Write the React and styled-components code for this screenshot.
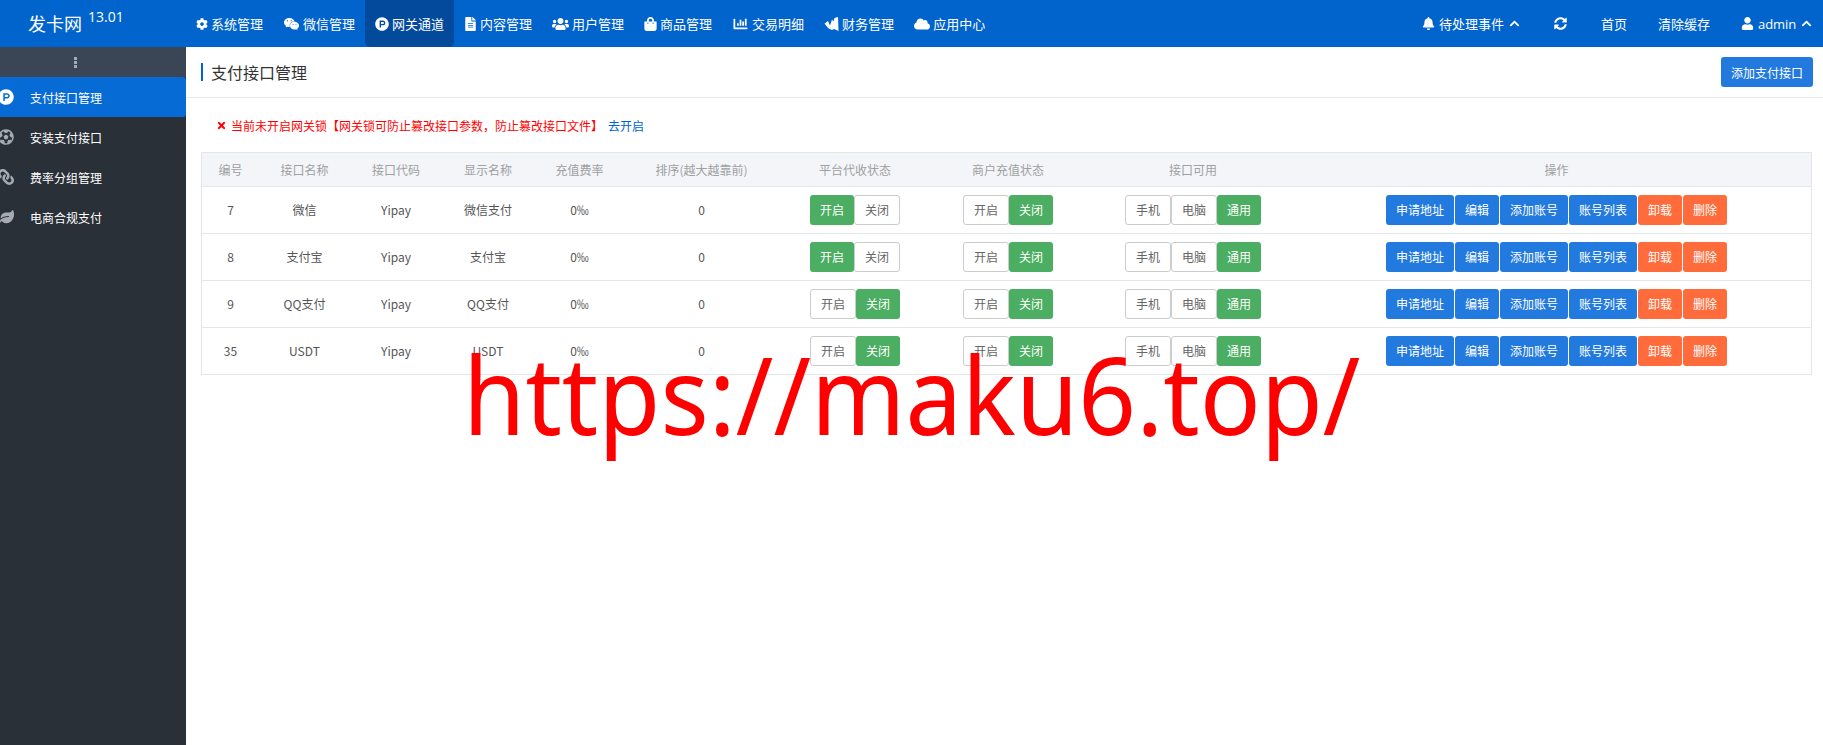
import React from "react";
import styled, { createGlobalStyle } from "styled-components";
import {
  FaCog, FaWeixin, FaProductHunt, FaFileAlt, FaUsers, FaShoppingBag, FaChartBar,
  FaCloud, FaBell, FaSyncAlt, FaUser, FaChevronUp, FaTimes, FaFutbol,
  FaLink, FaLeaf,
} from "react-icons/fa";

const GlobalStyle = createGlobalStyle`
  html, body { margin: 0; padding: 0; background: #fff; }
  body { font-family: "Noto Sans CJK SC", "Liberation Sans", sans-serif; font-size: 12px; color: #555; }
  * { box-sizing: border-box; }
`;

const Page = styled.div`
  position: relative;
  width: 1823px;
  height: 745px;
  overflow: hidden;
  display: flex;
  flex-direction: column;
`;

const TopBar = styled.header`
  height: 47px;
  flex: none;
  background: #0064cc;
  color: #fff;
  display: flex;
  align-items: stretch;
`;

const Logo = styled.div`
  width: 186px;
  flex: none;
  padding: 13px 0 0 28px;
  font-size: 18px;
  line-height: 20px;
  display: flex;
  align-items: flex-start;
  sup {
    font-family: "Open Sans", sans-serif;
    font-size: 14px;
    line-height: 14px;
    margin: -3px 0 0 6px;
    vertical-align: baseline;
  }
`;

const MainNav = styled.nav`
  display: flex;
  align-items: stretch;
  flex: 1;
`;

const NavItem = styled.div`
  display: flex;
  align-items: center;
  gap: 3px;
  padding: 0 10px;
  font-size: 13px;
  white-space: nowrap;
  border-radius: 0 0 5px 5px;
  background: ${(p) => (p.$active ? "#044a9c" : "transparent")};
  svg { flex: none; width: ${(p) => p.$icon || 14}px; height: 14px; }
`;

const RightNav = styled.div`
  display: flex;
  align-items: center;
  padding-right: 11px;
  font-size: 13px;
`;

const RightItem = styled.div`
  display: flex;
  align-items: center;
  gap: 4px;
  margin-left: ${(p) => p.$left || 0}px;
  white-space: nowrap;
  svg { width: 13px; height: 13px; }
  svg.caret { width: 11px; height: 11px; margin-left: 1px; }
`;

const AdminName = styled.span`
  font-family: "Open Sans", sans-serif;
  letter-spacing: -0.1px;
`;

const Body = styled.div`
  flex: 1;
  display: flex;
  min-height: 0;
`;

const Sidebar = styled.aside`
  width: 186px;
  flex: none;
  background: #2a3038;
  overflow: hidden;
`;

const SideToggle = styled.div`
  height: 30px;
  padding-right: 36px;
  background: #3a4556;
  display: flex;
  flex-direction: column;
  align-items: center;
  justify-content: center;
  gap: 1px;
  i {
    width: 3px;
    height: 3px;
    background: #a4abb5;
  }
`;

const SideItem = styled.div`
  height: 40px;
  display: flex;
  align-items: center;
  gap: 16px;
  font-size: 12px;
  color: #fff;
  border-radius: 0 3px 3px 0;
  background: ${(p) => (p.$active ? "#076bd6" : "transparent")};
  svg {
    flex: none;
    width: 16px;
    height: 16px;
    margin-left: -2px;
    color: ${(p) => (p.$active ? "#fff" : "#a5abb3")};
    transform: ${(p) => (p.$flip ? "scaleX(-1)" : "none")};
  }
`;

const Main = styled.main`
  flex: 1;
  min-width: 0;
`;

const TitleBar = styled.div`
  height: 51px;
  border-bottom: 1px solid #e8e8e8;
  display: flex;
  align-items: center;
  justify-content: space-between;
  padding: 0 10px 0 15px;
`;

const Title = styled.h1`
  margin: 0;
  font-size: 16px;
  font-weight: 400;
  line-height: 18px;
  color: #333;
  border-left: 2px solid #0064cc;
  padding-left: 8px;
`;

const Button = styled.button`
  height: 30px;
  border: 0;
  padding: 0 10px;
  border-radius: 3px;
  font: inherit;
  font-size: 12px;
  color: #fff;
  white-space: nowrap;
  background: ${(p) => ({ blue: "#227ade", orange: "#ff6b3b", green: "#4cae62" })[p.$tone] || "#fff"};
  ${(p) => !p.$tone && "color: #666; border: 1px solid #ccc; padding: 0 10px;"}
`;

const Notice = styled.div`
  display: flex;
  align-items: center;
  height: 28px;
  margin: 13px 0 13px 30px;
  color: #f00;
  font-size: 12px;
  svg { width: 11px; height: 11px; margin-right: 4px; }
  a { color: #0064cc; margin-left: 5px; text-decoration: none; }
`;

const TableWrap = styled.div`
  margin: 0 11px 0 15px;
  border: 1px solid #e3e7ec;
  border-bottom: 0;
`;

const Table = styled.table`
  width: 100%;
  table-layout: fixed;
  border-collapse: collapse;
  text-align: center;
`;

const Th = styled.th`
  height: 33px;
  width: ${(p) => p.$w}px;
  padding: 0;
  font-weight: 400;
  font-size: 12px;
  color: #a0a0a0;
  background: #f3f5f9;
  border-bottom: 1px solid #e3e7ec;
`;

const Td = styled.td`
  height: 47px;
  padding: 0;
  color: #555;
  font-size: 12px;
  border-bottom: 1px solid #e3e7ec;
`;

const Group = styled.div`
  display: inline-flex;
  vertical-align: middle;
  gap: ${(p) => p.$gap || 0}px;
`;

const Watermark = styled.div`
  position: absolute;
  left: 463px;
  top: 320px;
  font-family: "Noto Sans", sans-serif;
  font-size: 108px;
  line-height: 147px;
  color: #f00;
  white-space: nowrap;
  transform: scaleX(0.935);
  transform-origin: left top;
`;

const columns = [
  ["编号", 57], ["接口名称", 91], ["接口代码", 92], ["显示名称", 92], ["充值费率", 91],
  ["排序(越大越靠前)", 153], ["平台代收状态", 154], ["商户充值状态", 152], ["接口可用", 218], ["操作", 509],
];

const rows = [
  { id: 7, name: "微信", show: "微信支付", platformOn: true },
  { id: 8, name: "支付宝", show: "支付宝", platformOn: true },
  { id: 9, name: "QQ支付", show: "QQ支付", platformOn: false },
  { id: 35, name: "USDT", show: "USDT", platformOn: false },
];

// 财务管理 icon, not in the icon packs
const FinanceIcon = () => (
  <svg viewBox="0 0 14 14" fill="currentColor">
    <path d="M0 6.5 3.5 4 5.5 8.5 7.5 2.5 9 4.5 10 1 13.5 0 14 14 9.5 12 7.5 13 3.5 11Z" />
  </svg>
);

const navItems = [
  [FaCog, "系统管理", 12],
  [FaWeixin, "微信管理", 17],
  [FaProductHunt, "网关通道", 14],
  [FaFileAlt, "内容管理", 13],
  [FaUsers, "用户管理", 17],
  [FaShoppingBag, "商品管理", 13],
  [FaChartBar, "交易明细", 17],
  [FinanceIcon, "财务管理", 15],
  [FaCloud, "应用中心", 16],
];

const sideItems = [
  [FaProductHunt, "支付接口管理"],
  [FaFutbol, "安装支付接口"],
  [FaLink, "费率分组管理", true],
  [FaLeaf, "电商合规支付"],
];

const Toggle = ({ on }) => (
  <Group>
    <Button $tone={on ? "green" : undefined}>开启</Button>
    <Button $tone={on ? undefined : "green"}>关闭</Button>
  </Group>
);

export default function App() {
  return (
    <Page>
      <GlobalStyle />
      <TopBar>
        <Logo>发卡网<sup>13.01</sup></Logo>
        <MainNav>
          {navItems.map(([Icon, label, w], i) => (
            <NavItem key={label} $active={i === 2} $icon={w}><Icon />{label}</NavItem>
          ))}
        </MainNav>
        <RightNav>
          <RightItem><FaBell />待处理事件<FaChevronUp className="caret" /></RightItem>
          <RightItem $left={34}><FaSyncAlt /></RightItem>
          <RightItem $left={34}>首页</RightItem>
          <RightItem $left={31}>清除缓存</RightItem>
          <RightItem $left={31}><FaUser /><AdminName>admin</AdminName><FaChevronUp className="caret" /></RightItem>
        </RightNav>
      </TopBar>
      <Body>
        <Sidebar>
          <SideToggle><i /><i /><i /></SideToggle>
          {sideItems.map(([Icon, label, flip], i) => (
            <SideItem key={label} $active={i === 0} $flip={flip}><Icon />{label}</SideItem>
          ))}
        </Sidebar>
        <Main>
          <TitleBar>
            <Title>支付接口管理</Title>
            <Button $tone="blue">添加支付接口</Button>
          </TitleBar>
          <Notice>
            <FaTimes />当前未开启网关锁【网关锁可防止篡改接口参数，防止篡改接口文件】<a href="#gate">去开启</a>
          </Notice>
          <TableWrap>
            <Table>
              <thead>
                <tr>{columns.map(([label, w]) => <Th key={label} $w={w}>{label}</Th>)}</tr>
              </thead>
              <tbody>
                {rows.map((row) => (
                  <tr key={row.id}>
                    <Td>{row.id}</Td>
                    <Td>{row.name}</Td>
                    <Td>Yipay</Td>
                    <Td>{row.show}</Td>
                    <Td>0‰</Td>
                    <Td>0</Td>
                    <Td><Toggle on={row.platformOn} /></Td>
                    <Td><Toggle on={false} /></Td>
                    <Td>
                      <Group>
                        <Button>手机</Button>
                        <Button>电脑</Button>
                        <Button $tone="green">通用</Button>
                      </Group>
                    </Td>
                    <Td>
                      <Group $gap={1}>
                        <Button $tone="blue">申请地址</Button>
                        <Button $tone="blue">编辑</Button>
                        <Button $tone="blue">添加账号</Button>
                        <Button $tone="blue">账号列表</Button>
                        <Button $tone="orange">卸载</Button>
                        <Button $tone="orange">删除</Button>
                      </Group>
                    </Td>
                  </tr>
                ))}
              </tbody>
            </Table>
          </TableWrap>
        </Main>
      </Body>
      <Watermark>https://maku6.top/</Watermark>
    </Page>
  );
}
